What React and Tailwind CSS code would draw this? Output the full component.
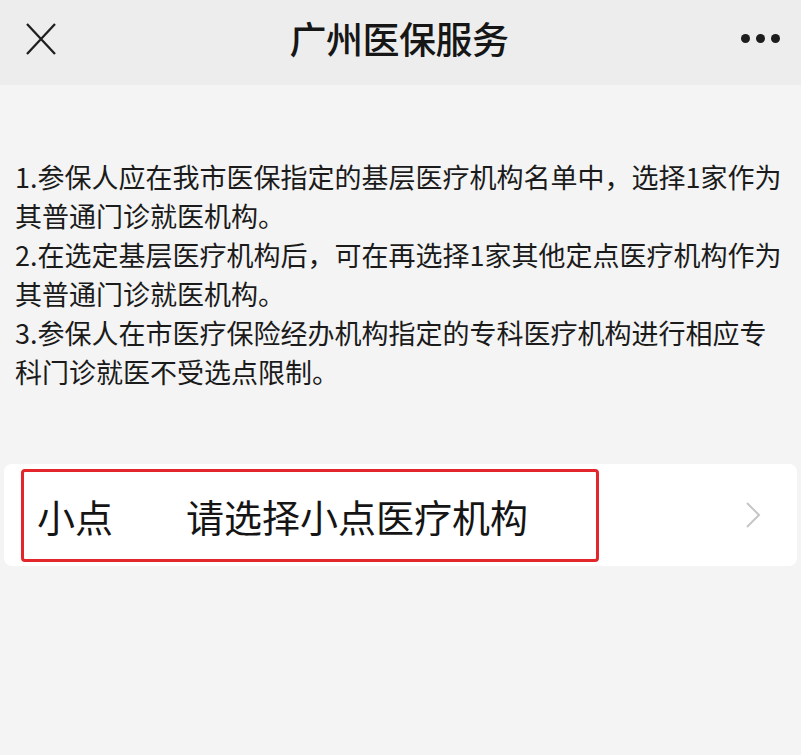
import React from 'react';

const font = { fontFamily: '"Noto Sans CJK SC", "Noto Sans", sans-serif' };

// lines broken as on the device
const lines = [
  '1.参保人应在我市医保指定的基层医疗机构名单中，选择1家作为',
  '其普通门诊就医机构。',
  '2.在选定基层医疗机构后，可在再选择1家其他定点医疗机构作为',
  '其普通门诊就医机构。',
  '3.参保人在市医疗保险经办机构指定的专科医疗机构进行相应专',
  '科门诊就医不受选点限制。',
];

const Header = () => (
  <div className="h-[85px] bg-[#ededed] flex items-center justify-between pl-[25px] pr-[21px] pb-[8px]">
    <svg width="32" height="32" viewBox="0 0 32 32" className="text-[#1f1f1f]">
      <path d="M2 1 L30 31 M30 1 L2 31" stroke="currentColor" strokeWidth="2.3" fill="none" />
    </svg>
    <h1 className="text-[37px] font-medium text-[#161616] leading-none tracking-[-0.5px]">广州医保服务</h1>
    <div className="flex items-center gap-[6px]">
      <span className="w-[9px] h-[9px] rounded-full bg-[#1d1d1d]" />
      <span className="w-[9px] h-[9px] rounded-full bg-[#1d1d1d]" />
      <span className="w-[9px] h-[9px] rounded-full bg-[#1d1d1d]" />
    </div>
  </div>
);

export default function App() {
  return (
    <div className="w-[801px] h-[755px] bg-[#f4f4f4] overflow-hidden" style={font}>
      <Header />

      <div className="pt-[72px] pl-[15px] text-[27px] leading-[39px] text-[#1b1b1b]">
        {lines.map((l, i) => (
          <p key={i} className="whitespace-nowrap">{l}</p>
        ))}
      </div>

      {/* selection row */}
      <div className="mt-[73px] mx-[4px] h-[102px] bg-white rounded-[8px] flex items-center pl-[17px] pr-[36px]">
        <div className="w-[578px] h-[93px] border-[3px] border-[#e3262b] rounded-[4px] flex items-center pl-[13px] text-[38px] text-[#151515]">
          <span className="w-[149px]">小点</span>
          <span>请选择小点医疗机构</span>
        </div>
        <svg width="16" height="28" viewBox="0 0 16 28" className="ml-auto text-[#c6c6c6]">
          <path d="M2 2 L14 14 L2 26" stroke="currentColor" strokeWidth="2" fill="none" />
        </svg>
      </div>
    </div>
  );
}
